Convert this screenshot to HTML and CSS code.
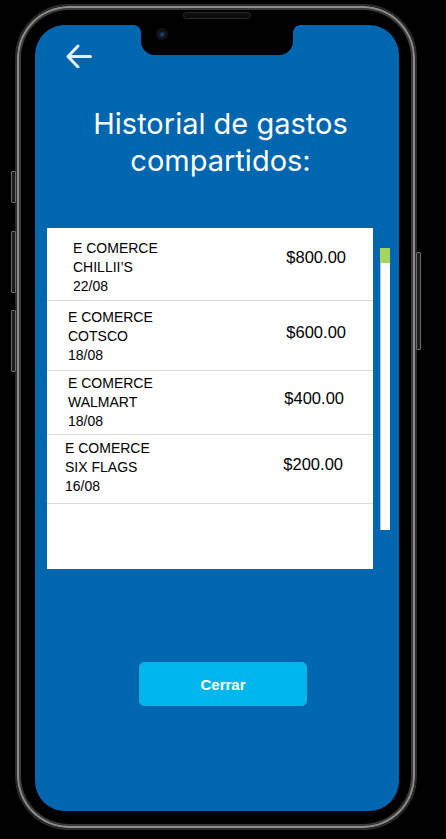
FILE: index.html
```html
<!DOCTYPE html>
<html lang="es">
<head>
<meta charset="utf-8">
<title>Historial de gastos compartidos</title>
<link rel="stylesheet" href="styles.css">
</head>
<body>
<div class="phone">
  <span class="side-btn side-btn--mute"></span>
  <span class="side-btn side-btn--vol-up"></span>
  <span class="side-btn side-btn--vol-down"></span>
  <span class="side-btn side-btn--power"></span>
  <span class="speaker"></span>
  <div class="screen">
    <div class="notch"><span class="camera"></span></div>
    <div class="topbar">
      <svg class="back" width="26" height="24" viewBox="0 0 26 24" aria-label="Volver">
        <path d="M24.5 12.5 H3 M12 2 L2 12.5 L12 23" fill="none" stroke="#e8eef6" stroke-width="3" stroke-linecap="round" stroke-linejoin="round"/>
      </svg>
    </div>
    <h1 class="title">Historial de gastos<br>compartidos:</h1>
    <div class="list-wrap">
      <div class="card">
        <div class="row row--1">
          <div class="row__info">E COMERCE<br>CHILLII’S<br>22/08</div>
          <div class="row__amount">$800.00</div>
        </div>
        <div class="row row--2">
          <div class="row__info">E COMERCE<br>COTSCO<br>18/08</div>
          <div class="row__amount">$600.00</div>
        </div>
        <div class="row row--3">
          <div class="row__info">E COMERCE<br>WALMART<br>18/08</div>
          <div class="row__amount">$400.00</div>
        </div>
        <div class="row row--4">
          <div class="row__info">E COMERCE<br>SIX FLAGS<br>16/08</div>
          <div class="row__amount">$200.00</div>
        </div>
      </div>
      <div class="scrollbar"><div class="scrollbar__thumb"></div></div>
    </div>
    <button class="btn-close" type="button">Cerrar</button>
  </div>
</div>
</body>
</html>
```
FILE: styles.css
```css
html, body {
  margin: 0;
  padding: 0;
  background: #000;
}
body {
  width: 446px;
  height: 839px;
  overflow: hidden;
}
.phone {
  position: relative;
  box-sizing: border-box;
  width: 402px;
  height: 826px;
  margin: 4px 0 0 15px;
  padding: 19px 16px 17px 18px;
  border: 2px solid #2b2b2b;
  border-radius: 54px;
  box-shadow: inset 0 0 0 2px #8c8c8c, inset 0 0 0 4px #3a3a3a;
  background: #000;
}
.side-btn {
  position: absolute;
  width: 3px;
  background: #1c1c1c;
  border: 1px solid #6a6a6a;
  border-radius: 1px;
}
.side-btn--mute { left: -6px; top: 165px; height: 30px; }
.side-btn--vol-up { left: -6px; top: 225px; height: 60px; }
.side-btn--vol-down { left: -6px; top: 304px; height: 60px; }
.side-btn--power { right: -6px; top: 246px; height: 96px; }
.speaker {
  position: absolute;
  left: 166px;
  top: 6px;
  width: 66px;
  height: 5px;
  background: #0d0d0d;
  border: 1px solid #2a2a2a;
  border-radius: 4px;
}
.screen {
  position: relative;
  height: 786px;
  background: #0066b0;
  border-radius: 30px;
  overflow: hidden;
}
.notch {
  position: absolute;
  top: 0;
  left: 106px;
  width: 152px;
  height: 30px;
  background: #000;
  border-radius: 0 0 14px 14px;
}
.notch::before,
.notch::after {
  content: "";
  position: absolute;
  top: 0;
  width: 7px;
  height: 7px;
}
.notch::before {
  left: -7px;
  background: radial-gradient(circle at 0 100%, transparent 6.5px, #000 7px);
}
.notch::after {
  right: -7px;
  background: radial-gradient(circle at 100% 100%, transparent 6.5px, #000 7px);
}
.camera {
  position: absolute;
  left: 15px;
  top: 3px;
  width: 12px;
  height: 12px;
  border-radius: 50%;
  background: radial-gradient(circle at 50% 55%, #2d4a8a 0, #123 2.5px, #0b0f18 4px, #151515 6px);
}
.topbar {
  padding: 19px 0 0 31px;
}
.back {
  display: block;
}
.title {
  margin: 37px 0 0;
  padding-left: 7px;
  font-family: Inter, "Open Sans", sans-serif;
  font-weight: 400;
  font-size: 29px;
  line-height: 37px;
  color: #fff;
  text-align: center;
}
.list-wrap {
  display: flex;
  align-items: flex-start;
  gap: 7px;
  margin-top: 49px;
  padding-left: 12px;
}
.card {
  width: 326px;
  height: 341px;
  background: #fff;
}
.row {
  box-sizing: border-box;
  display: flex;
  align-items: flex-start;
  justify-content: space-between;
  border-bottom: 1px solid #dadada;
  font-family: "Liberation Sans", Arial, sans-serif;
  color: #000;
}
.row__info {
  font-size: 14px;
  line-height: 19px;
}
.row__amount {
  font-size: 16.5px;
  line-height: 19px;
}
.row--1 { height: 73px; padding: 11px 27px 0 26px; }
.row--1 .row__amount { margin-top: 9px; }
.row--2 { height: 70px; padding: 7px 27px 0 21px; }
.row--2 .row__amount { margin-top: 15px; }
.row--3 { height: 64px; padding: 3px 29px 0 21px; }
.row--3 .row__amount { margin-top: 15px; }
.row--4 { height: 69px; padding: 4px 30px 0 18px; }
.row--4 .row__amount { margin-top: 16px; }
.scrollbar {
  width: 10px;
  height: 282px;
  margin-top: 20px;
  background: #fff;
  box-shadow: inset 1px 0 0 #9cc9ea;
}
.scrollbar__thumb {
  height: 15px;
  background: #a5d55b;
}
.btn-close {
  display: block;
  width: 168px;
  height: 44px;
  margin: 93px 0 0 104px;
  padding: 0;
  border: 1px solid #1aa9df;
  border-radius: 5px;
  background: #00b7ed;
  color: #fff;
  font-family: "Liberation Sans", Arial, sans-serif;
  font-weight: 700;
  font-size: 15px;
}
```
